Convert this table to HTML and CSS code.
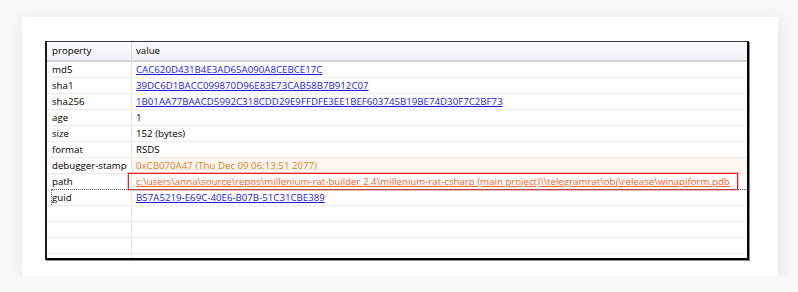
FILE: index.html
```html
<!DOCTYPE html>
<html>
<head>
<meta charset="utf-8">
<link rel="stylesheet" href="styles.css">
</head>
<body>
<div class="card">
  <div class="frame">
    <div class="row head"><div class="c1">property</div><div class="c2">value</div></div>
    <div class="row"><div class="c1">md5</div><div class="c2"><a class="link">CAC620D431B4E3AD65A090A8CEBCE17C</a></div></div>
    <div class="row"><div class="c1">sha1</div><div class="c2"><a class="link">39DC6D1BACC099870D96E83E73CAB58B7B912C07</a></div></div>
    <div class="row"><div class="c1">sha256</div><div class="c2"><a class="link">1B01AA77BAACD5992C318CDD29E9FFDFE3EE1BEF603745B19BE74D30F7C2BF73</a></div></div>
    <div class="row"><div class="c1">age</div><div class="c2">1</div></div>
    <div class="row"><div class="c1">size</div><div class="c2">152 (bytes)</div></div>
    <div class="row"><div class="c1">format</div><div class="c2">RSDS</div></div>
    <div class="row"><div class="c1">debugger-stamp</div><div class="c2 stamp">0xCB070A47 (Thu Dec 09 06:13:51 2077)</div></div>
    <div class="row path"><div class="c1">path</div><div class="c2"><a class="link warn">c:\users\anna\source\repos\millenium-rat-builder 2.4\millenium-rat-csharp (main project)\\telegramrat\obj\release\winapiform.pdb</a></div><div class="redbox"></div></div>
    <div class="row guid"><div class="c1">guid</div><div class="c2"><a class="link">B57A5219-E69C-40E6-B07B-51C31CBE389</a></div><div class="focus"></div></div>
    <div class="row"><div class="c1"></div><div class="c2"></div></div>
    <div class="row"><div class="c1"></div><div class="c2"></div></div>
    <div class="row"><div class="c1"></div><div class="c2"></div></div>
    <div class="row"><div class="c1"></div><div class="c2"></div></div>
  </div>
</div>
</body>
</html>
```

FILE: styles.css
```css
html, body {
  margin: 0;
  padding: 0;
}
body {
  background: #f8f8f8;
  padding: 17px 0 0 22px;
  font-family: "Open Sans", "Noto Sans", sans-serif;
  font-size: 9.7px;
  color: #000;
}
.card {
  width: 756px;
  height: 259px;
  box-sizing: border-box;
  background: #fff;
  padding: 24px 29px 0 23px;
  box-shadow: 2px 3px 14px rgba(0, 0, 0, 0.09);
}
.frame {
  width: 704px;
  height: 219px;
  box-sizing: border-box;
  border-top: 1px solid #3c3c3c;
  border-left: 2px solid #1a1a1a;
  border-right: 2px solid #000;
  border-bottom: 2px solid #000;
  box-shadow: 1px 1px 0 #8a8a8a;
  overflow: hidden;
  background: #fff;
}
.row {
  position: relative;
  display: grid;
  grid-template-columns: 85px 1fr;
  height: 16px;
  box-sizing: border-box;
  border-bottom: 1px solid #ececec;
  line-height: 15px;
  white-space: nowrap;
}
.row.head {
  height: 20px;
  line-height: 18px;
  background: linear-gradient(#fafbfc, #f1f2f5);
  border-bottom: 2px solid #d6d6d6;
}
.c1 {
  padding-left: 5px;
  border-right: 1px solid #e6e6e6;
}
.head .c1 {
  border-right-color: #d9d9d9;
}
.c2 {
  padding-left: 4px;
}
.link {
  color: #1c1ce0;
  text-decoration: underline;
}
.link.warn {
  color: #f2622a;
}
.stamp {
  color: #e67e22;
  background: #fdf6f1;
}
.redbox {
  position: absolute;
  left: 81px;
  width: 610px;
  top: -1px;
  bottom: -1px;
  border: 1px solid #ec1c24;
  box-shadow: 0 0 0 1px rgba(240, 60, 70, 0.35);
  box-sizing: border-box;
}
.focus {
  position: absolute;
  left: 4px;
  right: 0;
  top: -1px;
  bottom: 0;
  border-top: 1px dotted #6a6a6a;
  border-left: 1px dotted #6a6a6a;
  pointer-events: none;
}
```
